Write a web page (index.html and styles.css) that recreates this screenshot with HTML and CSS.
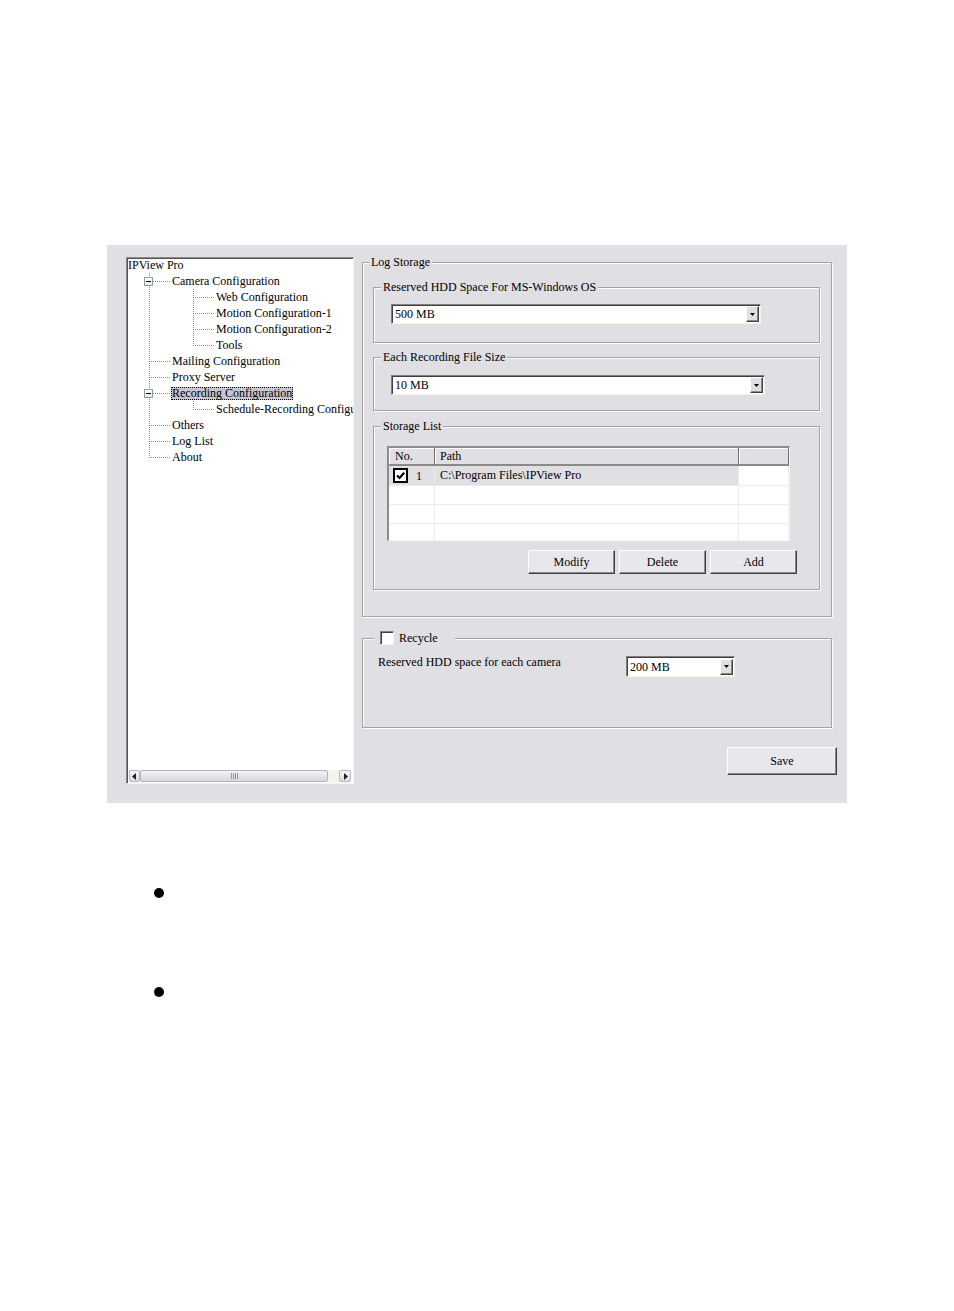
FILE: index.html
```html
<!DOCTYPE html>
<html>
<head>
<meta charset="utf-8">
<title>IPView Pro - Recording Configuration</title>
<link rel="stylesheet" href="styles.css">
</head>
<body>
<div class="page">
  <div class="panel">
    <div class="tree">
      <div class="tree-body">
        <div class="row"><span class="lbl">IPView Pro</span></div>
        <div class="row"><span class="ind tee has-toggle"><span class="toggle"></span></span><span class="lbl">Camera Configuration</span></div>
        <div class="row"><span class="ind pass"></span><span class="ind tee"></span><span class="lbl">Web Configuration</span></div>
        <div class="row"><span class="ind pass"></span><span class="ind tee"></span><span class="lbl">Motion Configuration-1</span></div>
        <div class="row"><span class="ind pass"></span><span class="ind tee"></span><span class="lbl">Motion Configuration-2</span></div>
        <div class="row"><span class="ind pass"></span><span class="ind elbow"></span><span class="lbl">Tools</span></div>
        <div class="row"><span class="ind tee"></span><span class="lbl">Mailing Configuration</span></div>
        <div class="row"><span class="ind tee"></span><span class="lbl">Proxy Server</span></div>
        <div class="row"><span class="ind tee has-toggle"><span class="toggle"></span></span><span class="lbl sel">Recording Configuration</span></div>
        <div class="row"><span class="ind pass"></span><span class="ind elbow"></span><span class="lbl">Schedule-Recording Configuration</span></div>
        <div class="row"><span class="ind tee"></span><span class="lbl">Others</span></div>
        <div class="row"><span class="ind tee"></span><span class="lbl">Log List</span></div>
        <div class="row"><span class="ind elbow"></span><span class="lbl">About</span></div>
      </div>
      <div class="hscroll">
        <span class="sb-btn sb-left"><svg width="5" height="7" viewBox="0 0 5 7"><path d="M4 0 L0 3.5 L4 7 Z" fill="#222"/></svg></span>
        <span class="sb-thumb"><span class="grip"></span></span>
        <span class="sb-track"></span>
        <span class="sb-btn sb-right"><svg width="5" height="7" viewBox="0 0 5 7"><path d="M1 0 L5 3.5 L1 7 Z" fill="#222"/></svg></span>
      </div>
    </div>

    <div class="right">
      <fieldset class="grp log">
        <legend>Log Storage</legend>

        <fieldset class="grp sub sub1">
          <legend>Reserved HDD Space For MS-Windows OS</legend>
          <div class="select sel-os">
            <span class="val">500 MB</span>
            <span class="drop"><svg width="5" height="3" viewBox="0 0 5 3"><path d="M0 0 H5 L2.5 3 Z" fill="#000"/></svg></span>
          </div>
        </fieldset>

        <fieldset class="grp sub sub2">
          <legend>Each Recording File Size</legend>
          <div class="select sel-file">
            <span class="val">10 MB</span>
            <span class="drop"><svg width="5" height="3" viewBox="0 0 5 3"><path d="M0 0 H5 L2.5 3 Z" fill="#000"/></svg></span>
          </div>
        </fieldset>

        <fieldset class="grp sub sub3">
          <legend>Storage List</legend>
          <div class="tbl">
            <div class="trow thead">
              <span class="th">No.</span>
              <span class="th">Path</span>
              <span class="th"></span>
            </div>
            <div class="trow tsel">
              <span class="td no"><span class="chk"><svg width="11" height="11" viewBox="0 0 11 11"><path d="M2 5.5 L4.5 8 L9.2 2.8" fill="none" stroke="#000" stroke-width="2.2"/></svg></span><span class="num">1</span></span>
              <span class="td path">C:\Program Files\IPView Pro</span>
              <span class="td"></span>
            </div>
            <div class="trow"><span class="td"></span><span class="td"></span><span class="td"></span></div>
            <div class="trow"><span class="td"></span><span class="td"></span><span class="td"></span></div>
            <div class="trow"><span class="td"></span><span class="td"></span><span class="td"></span></div>
          </div>
          <div class="btn-row">
            <span class="btn">Modify</span>
            <span class="btn">Delete</span>
            <span class="btn">Add</span>
          </div>
        </fieldset>
      </fieldset>

      <fieldset class="grp recycle">
        <legend><span class="leg-chk"><span class="cbox"></span><span>Recycle</span></span></legend>
        <div class="cam-row">
          <span class="cam-lbl">Reserved HDD space for each camera</span>
          <div class="select sel-cam">
            <span class="val">200 MB</span>
            <span class="drop"><svg width="5" height="3" viewBox="0 0 5 3"><path d="M0 0 H5 L2.5 3 Z" fill="#000"/></svg></span>
          </div>
        </div>
      </fieldset>

      <span class="btn save">Save</span>
    </div>
  </div>

  <div class="notes">
    <div class="note"><span class="dot"></span></div>
    <div class="note"><span class="dot"></span></div>
  </div>
</div>
</body>
</html>
```

FILE: styles.css
```css
* { box-sizing: border-box; }

body {
  margin: 0;
  background: #ffffff;
  font-family: "Liberation Serif", "Times New Roman", serif;
  font-size: 12px;
  color: #000;
}

.page {
  padding: 245px 0 0 107px;
}

.panel {
  width: 740px;
  height: 558px;
  background: #e0dfe3;
  display: flex;
  align-items: flex-start;
  padding-left: 19px;
}

/* ---------- tree view ---------- */
.tree {
  margin-top: 12px;
  width: 228px;
  height: 527px;
  background: #fff;
  border: 1px solid;
  border-color: #8a8a8a #f4f3ee #f4f3ee #8a8a8a;
  box-shadow: inset 1px 1px 0 #555;
  display: flex;
  flex-direction: column;
}

.tree-body {
  flex: 1;
  overflow: hidden;
  margin-top: -1px;
}

.row {
  height: 16px;
  display: flex;
  align-items: center;
  white-space: nowrap;
}

.ind {
  width: 44px;
  height: 16px;
  flex: none;
}

.pass {
  background: repeating-linear-gradient(to bottom, #8c8c8c 0 1px, transparent 1px 2px) 22px 0 / 1px 16px no-repeat;
}

.tee {
  background:
    repeating-linear-gradient(to bottom, #8c8c8c 0 1px, transparent 1px 2px) 22px 0 / 1px 16px no-repeat,
    repeating-linear-gradient(to right, #8c8c8c 0 1px, transparent 1px 2px) 24px 8px / 20px 1px no-repeat;
}

.elbow {
  background:
    repeating-linear-gradient(to bottom, #8c8c8c 0 1px, transparent 1px 2px) 22px 0 / 1px 9px no-repeat,
    repeating-linear-gradient(to right, #8c8c8c 0 1px, transparent 1px 2px) 24px 8px / 20px 1px no-repeat;
}

.has-toggle {
  display: flex;
  align-items: center;
  padding-left: 17px;
}

.toggle {
  width: 9px;
  height: 9px;
  border: 1px solid #8e9aa6;
  background: linear-gradient(#ffffff, #e4e4e8);
  display: flex;
  align-items: center;
  justify-content: center;
}

.toggle::before {
  content: "";
  width: 5px;
  height: 1px;
  background: #000;
}

.lbl {
  padding: 0 1px;
  line-height: 13px;
}

.sel {
  background: #c6c5d1;
  outline: 1px dotted #000;
  outline-offset: -1px;
}

/* horizontal scrollbar */
.hscroll {
  height: 12px;
  margin: 0 2px 1px 2px;
  display: flex;
  flex: none;
}

.sb-btn {
  height: 12px;
  border: 1px solid #b4b8c6;
  border-radius: 2px;
  background: linear-gradient(#f6f6f9, #d9d9e1);
  display: flex;
  align-items: center;
  justify-content: center;
  flex: none;
}

.sb-left { width: 11px; }
.sb-right { width: 12px; }

.sb-thumb {
  width: 188px;
  height: 12px;
  border: 1px solid #b0b4c2;
  border-radius: 2px;
  background: linear-gradient(#f3f3f7, #d6d7df);
  display: flex;
  align-items: center;
  justify-content: center;
  flex: none;
}

.grip {
  width: 7px;
  height: 6px;
  background: repeating-linear-gradient(to right, #8e92a0 0 1px, transparent 1px 2px);
}

.sb-track {
  flex: 1;
  background: #f3f3ef;
}

/* ---------- right column ---------- */
.right {
  margin-left: 8px;
  margin-top: 10px;
  width: 475px;
  display: flex;
  flex-direction: column;
}

.grp {
  margin: 0;
  min-width: 0;
  border: 1px solid #a3a3a6;
  box-shadow: inset 1px 1px 0 #ffffff, 1px 1px 0 #ffffff;
  padding: 0 0 0 6px;
}

.grp > legend {
  padding: 0 2px;
  line-height: 14px;
  height: 14px;
  background: #e0dfe3;
  white-space: nowrap;
}

.log {
  width: 470px;
  padding-top: 11px;
  padding-bottom: 26px;
}

.sub {
  width: 447px;
  margin-left: 4px;
  padding-left: 7px;
}

.sub1 { padding-bottom: 18px; }
.sub2 { margin-top: 7px; padding-bottom: 15px; }
.sub3 { margin-top: 8px; padding-bottom: 15px; }

/* combo box */
.select {
  display: flex;
  align-items: center;
  height: 20px;
  background: #fff;
  border: 1px solid;
  border-color: #808080 #f3f3ec #f3f3ec #808080;
  box-shadow: inset 1px 1px 0 #404040;
}

.select .val {
  flex: 1;
  padding-left: 3px;
  line-height: 14px;
  white-space: nowrap;
}

.drop {
  width: 13px;
  height: 16px;
  margin-right: 1px;
  background: #e0dfe3;
  border: 1px solid;
  border-color: #ffffff #404040 #404040 #ffffff;
  box-shadow: inset -1px -1px 0 #8a8a8a;
  display: flex;
  align-items: center;
  justify-content: center;
  flex: none;
}

.sel-os { width: 370px; margin-left: 10px; margin-top: 10px; }
.sel-file { width: 374px; margin-left: 10px; margin-top: 11px; }
.sel-cam { width: 109px; height: 21px; }

/* list view */
.tbl {
  margin-left: 6px;
  margin-top: 13px;
  width: 403px;
  height: 95px;
  background: #fff;
  border-style: solid;
  border-width: 2px 1px 1px 2px;
  border-color: #8c8c8c #f6f6f2 #f6f6f2 #8c8c8c;
  overflow: hidden;
}

.trow {
  display: grid;
  grid-template-columns: 46px 304px 1fr;
  height: 19px;
}

.thead { height: 18px; }

.th {
  background: #e0dfe3;
  border-right: 1px solid #6f6f6f;
  border-bottom: 2px solid #8a8a8a;
  box-shadow: inset 1px 1px 0 #ffffff;
  padding-left: 6px;
  line-height: 16px;
}

.th:nth-child(2) { padding-left: 5px; }

.td {
  border-right: 1px solid #ebebeb;
  border-bottom: 1px solid #ebebeb;
  line-height: 18px;
  white-space: nowrap;
}

.tsel { height: 20px; }

.tsel .td:nth-child(1),
.tsel .td:nth-child(2) {
  background: #e0dfe3;
}

.td.no {
  display: flex;
  align-items: center;
  padding-left: 4px;
}

.chk {
  width: 15px;
  height: 15px;
  border: 2px solid #000;
  background: #fff;
  display: flex;
  align-items: center;
  justify-content: center;
  flex: none;
}

.num { margin-left: 8px; }

.td.path { padding-left: 5px; }

/* buttons */
.btn-row {
  display: flex;
  justify-content: flex-end;
  gap: 4px;
  margin-top: 9px;
  padding-right: 22px;
}

.btn {
  width: 87px;
  height: 24px;
  background: #e8e7eb;
  border: 1px solid;
  border-color: #ffffff #404040 #404040 #ffffff;
  box-shadow: inset -1px -1px 0 #8a8a8a;
  display: flex;
  align-items: center;
  justify-content: center;
  flex: none;
}

/* recycle group */
.recycle {
  width: 470px;
  margin-top: 13px;
  padding-left: 11px;
  padding-bottom: 50px;
}

.recycle > legend {
  height: 16px;
  line-height: 16px;
  padding: 0 17px 0 6px;
}

.leg-chk {
  display: flex;
  align-items: center;
  gap: 5px;
  height: 16px;
}

.cbox {
  width: 14px;
  height: 14px;
  background: #fff;
  border: 1px solid;
  border-color: #808080 #f4f4f0 #f4f4f0 #808080;
  box-shadow: inset 1px 1px 0 #404040;
  flex: none;
}

.cam-row {
  display: flex;
  align-items: flex-start;
  margin-left: 4px;
  margin-top: 10px;
}

.cam-lbl {
  width: 248px;
  line-height: 13px;
  white-space: nowrap;
}

.save {
  width: 110px;
  height: 28px;
  margin-top: 19px;
  align-self: flex-end;
}

/* ---------- bullets below ---------- */
.notes {
  padding: 85px 0 0 47px;
}

.note {
  height: 99px;
}

.dot {
  display: block;
  width: 10px;
  height: 10px;
  border-radius: 50%;
  background: #000;
}
```
